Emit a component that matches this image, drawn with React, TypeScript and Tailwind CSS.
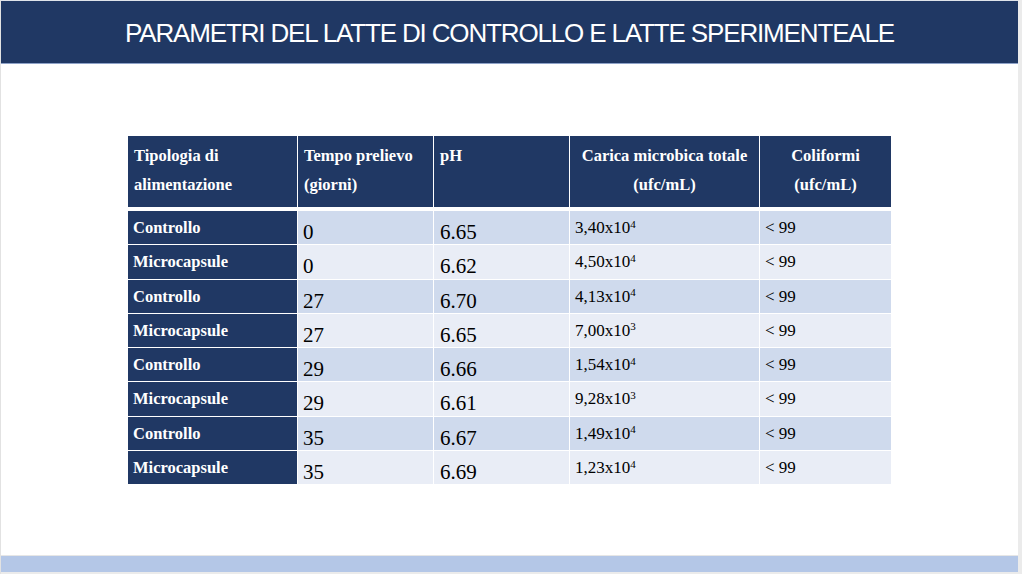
const rows = [
  { tipo: "Controllo", tempo: "0", ph: "6.65", carica: ["3,40x10", "4"] },
  { tipo: "Microcapsule", tempo: "0", ph: "6.62", carica: ["4,50x10", "4"] },
  { tipo: "Controllo", tempo: "27", ph: "6.70", carica: ["4,13x10", "4"] },
  { tipo: "Microcapsule", tempo: "27", ph: "6.65", carica: ["7,00x10", "3"] },
  { tipo: "Controllo", tempo: "29", ph: "6.66", carica: ["1,54x10", "4"] },
  { tipo: "Microcapsule", tempo: "29", ph: "6.61", carica: ["9,28x10", "3"] },
  { tipo: "Controllo", tempo: "35", ph: "6.67", carica: ["1,49x10", "4"] },
  { tipo: "Microcapsule", tempo: "35", ph: "6.69", carica: ["1,23x10", "4"] },
];

const serif = { fontFamily: "'Liberation Serif', 'Times New Roman', serif" };

export default function App() {
  return (
    <div className="flex h-[574px] w-[1022px] bg-[#ebebeb]">
      <div className="flex w-[1018px] flex-col border-l border-[#e2e2e2] bg-white">
        {/* title bar */}
        <div className="h-px bg-[#dfe3ea]" />
        <div className="flex h-[62px] items-center justify-center bg-[#203864] pt-[3px]">
          <h1
            className="text-[26px] tracking-[-1.15px] text-white"
            style={{ fontFamily: "'Liberation Sans', Arial, sans-serif" }}
          >
            PARAMETRI DEL LATTE DI CONTROLLO E LATTE SPERIMENTEALE
          </h1>
        </div>
        <div className="h-px bg-[#8ea2c8]" />

        {/* table */}
        <div className="flex flex-1 pl-[127px] pt-[72px]" style={serif}>
          <div className="grid grid-cols-[170px_134px_135px_189px_131px] gap-x-px gap-y-px self-start">
            {/* header */}
            <div className="mr-px h-[71px] bg-[#203864] pl-[6px] pt-[5px] text-[16.5px] leading-[29px] font-bold text-white">
              Tipologia di
              <br />
              alimentazione
            </div>
            <div className="-ml-px h-[71px] bg-[#203864] pl-[6px] pt-[5px] text-[16.5px] leading-[29px] font-bold text-white">
              Tempo prelievo
              <br />
              (giorni)
            </div>
            <div className="h-[71px] bg-[#203864] pl-[6px] pt-[5px] text-[16.5px] leading-[29px] font-bold text-white">
              pH
            </div>
            <div className="h-[71px] bg-[#203864] pt-[5px] text-center text-[16.5px] leading-[29px] font-bold text-white">
              Carica microbica totale
              <br />
              (ufc/mL)
            </div>
            <div className="h-[71px] bg-[#203864] pt-[5px] text-center text-[16.5px] leading-[29px] font-bold text-white">
              Coliformi
              <br />
              (ufc/mL)
            </div>
            <div className="col-span-5 h-[2px]" />

            {rows.map((r, i) => {
              const bg = i % 2 === 0 ? "bg-[#cfdaed]" : "bg-[#e9edf6]";
              return [
                <div
                  key={`a${i}`}
                  className="mr-px h-[33.3px] bg-[#203864] pl-[5px] pt-[7px] text-[16.5px] leading-[20px] font-bold text-white"
                >
                  {r.tipo}
                </div>,
                <div
                  key={`b${i}`}
                  className={`-ml-px h-[33.3px] ${bg} pl-[5px] pt-[9px] text-[21px] leading-[24px] text-black`}
                >
                  {r.tempo}
                </div>,
                <div
                  key={`c${i}`}
                  className={`h-[33.3px] ${bg} pl-[6px] pt-[9px] text-[21px] leading-[24px] text-black`}
                >
                  {r.ph}
                </div>,
                <div
                  key={`d${i}`}
                  className={`h-[33.3px] ${bg} pl-[5px] pt-[7px] text-[17px] leading-[20px] text-black`}
                >
                  {r.carica[0]}
                  <sup className="text-[11px]">{r.carica[1]}</sup>
                </div>,
                <div
                  key={`e${i}`}
                  className={`h-[33.3px] ${bg} pl-[5px] pt-[7px] text-[17px] leading-[20px] text-black`}
                >
                  &lt; 99
                </div>,
              ];
            })}
          </div>
        </div>

        {/* bottom band */}
        <div className="h-px bg-[#e6e6e6]" />
        <div className="h-[16px] bg-[#b4c7e7]" />
        <div className="h-[2px] bg-[#ebebeb]" />
      </div>
    </div>
  );
}
